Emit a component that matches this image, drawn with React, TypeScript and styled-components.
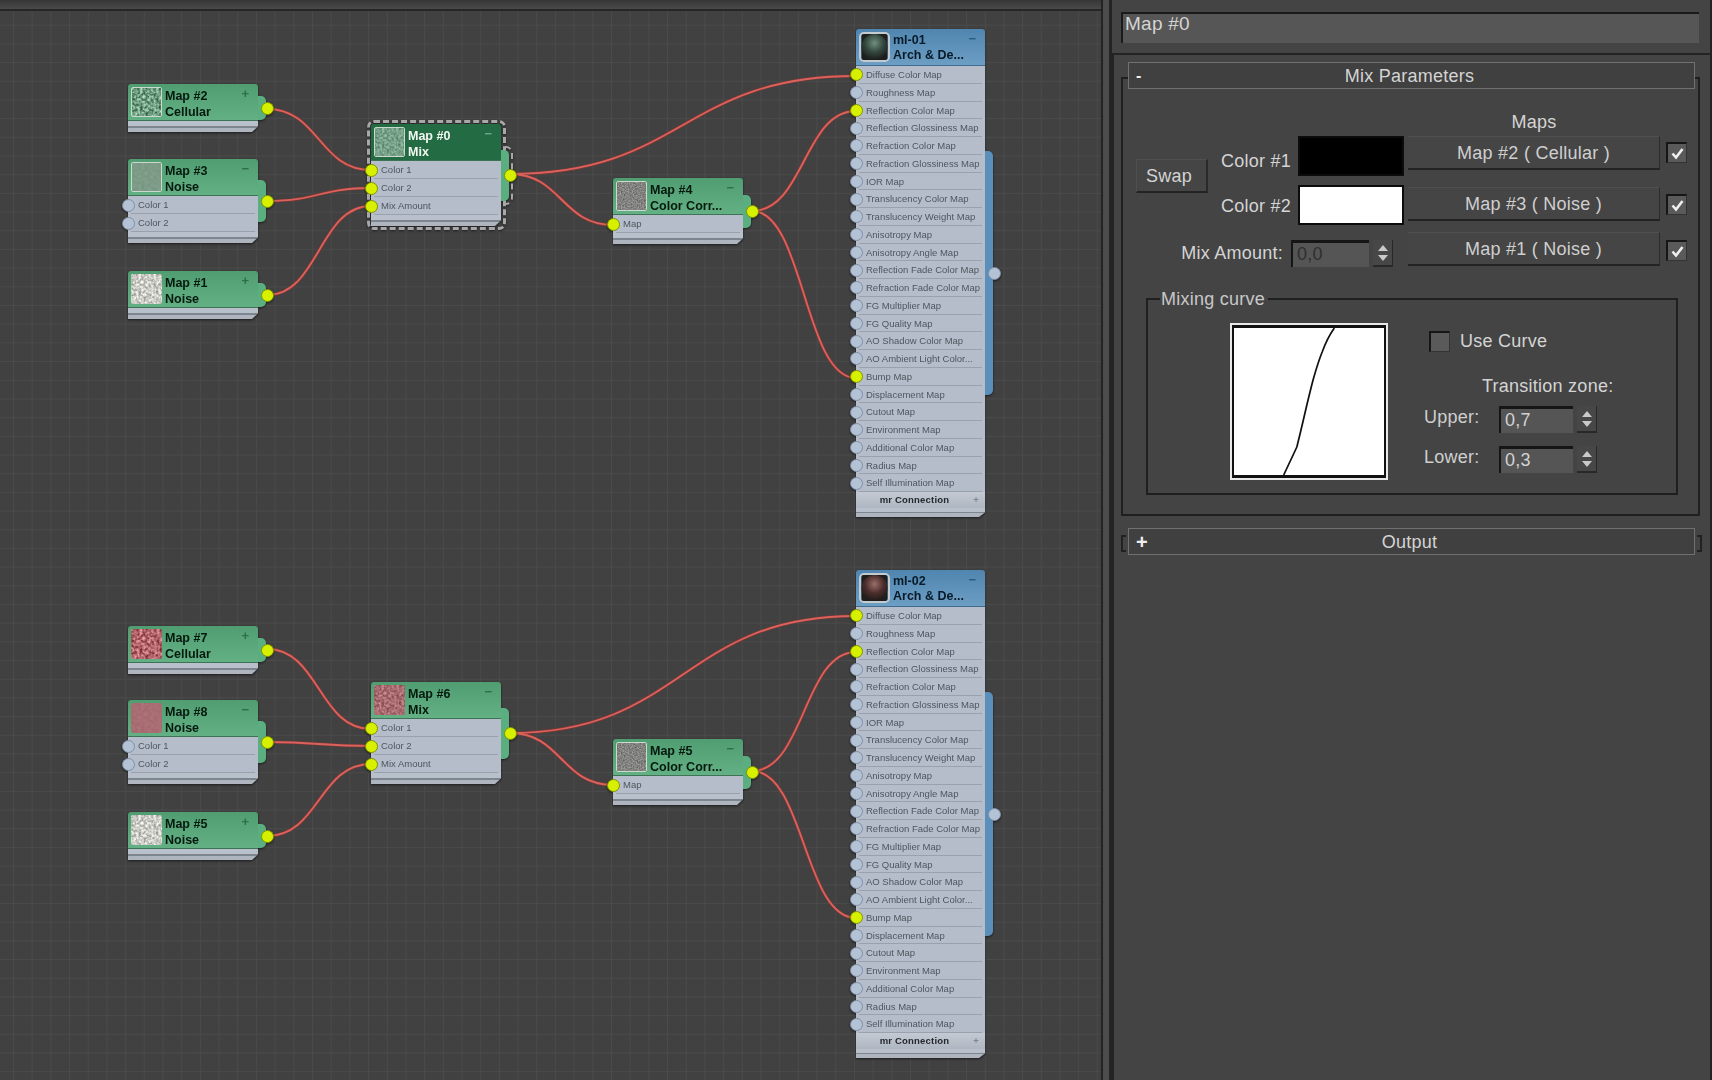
import React, { useId } from "react";
import styled, { createGlobalStyle } from "styled-components";

const GlobalStyle = createGlobalStyle`
  html, body {
    margin: 0;
    background: #444;
    font-family: "Liberation Sans", Arial, sans-serif;
  }
`;

const Page = styled.div`
  display: flex;
  width: 1712px;
  height: 1080px;
  overflow: hidden;
  background: #444;
`;

/* ---------- node canvas ---------- */

const Canvas = styled.div`
  position: relative;
  width: 1101px;
  height: 1080px;
  flex: none;
  background-color: #414141;
  background-image: linear-gradient(#4a4a4a 1px, transparent 1px),
    linear-gradient(90deg, #4a4a4a 1px, transparent 1px);
  background-size: 18.7px 18.7px;
  background-position: 13px 6px;

  &::before {
    content: "";
    position: absolute;
    left: 0;
    right: 0;
    top: 0;
    height: 9px;
    background: linear-gradient(#363636, #4a4a4a);
    border-bottom: 2px solid #262626;
  }
`;

const Wires = styled.svg`
  position: absolute;
  left: 0;
  top: 0;
  filter: blur(0.4px);
`;

const Node = styled.div<{ $x: number; $y: number; $w?: number }>`
  position: absolute;
  left: ${(p) => p.$x}px;
  top: ${(p) => p.$y}px;
  width: ${(p) => p.$w ?? 130}px;
  filter: blur(0.45px) drop-shadow(0 1px 1px #1c1c1c);
`;

const Tab = styled.div<{ $color: string; $dashed?: boolean }>`
  position: absolute;
  top: 25%;
  bottom: 25%;
  right: -8px;
  width: 12px;
  border-radius: 0 5px 5px 0;
  background: ${(p) => p.$color};

  ${(p) =>
    p.$dashed &&
    `&::after {
      content: "";
      position: absolute;
      inset: -4px -4px -4px 8px;
      border: 2px dashed #a8a8a8;
      border-left: none;
      border-radius: 0 7px 7px 0;
    }`}
`;

const Dashed = styled.div`
  position: absolute;
  inset: -4px -5px -4px -4px;
  border: 3px dashed #a8a8a8;
  border-radius: 7px;
`;

const Body = styled.div`
  position: relative;
  display: flex;
  flex-direction: column;
  border-radius: 3px 3px 0 0;
  overflow: hidden;
`;

const Header = styled.div<{ $tone: "green" | "dark" | "blue" }>`
  display: flex;
  align-items: flex-start;
  height: 37px;
  box-sizing: border-box;
  padding: 3px 9px 0 3px;
  gap: 3px;
  border-bottom: 1px solid
    ${(p) => (p.$tone === "blue" ? "#3e6b8e" : "#3f7356")};
  background: ${(p) =>
    p.$tone === "green"
      ? "linear-gradient(#4f9d70, #62b083)"
      : p.$tone === "dark"
      ? "#236b42"
      : "linear-gradient(#4f85af, #6d9ec4)"};
`;

const Titles = styled.div<{ $light?: boolean; $navy?: boolean }>`
  flex: 1;
  min-width: 0;
  padding-top: ${(p) => (p.$navy ? 1 : 2)}px;
  font-size: 12.5px;
  line-height: ${(p) => (p.$navy ? 14.5 : 15.5)}px;
  font-weight: 700;
  white-space: nowrap;
  color: ${(p) => (p.$light ? "#f2f7f3" : p.$navy ? "#081a28" : "#06190f")};
`;

const Toggle = styled.span<{ $color: string }>`
  font-size: 13px;
  line-height: 13px;
  font-weight: 700;
  color: ${(p) => p.$color};
`;

const Row = styled.div<{ $h?: number }>`
  position: relative;
  height: ${(p) => p.$h ?? 18}px;
  box-sizing: border-box;
  padding-left: 10px;
  background: #b4bdc9;
  font-size: 9.5px;
  line-height: ${(p) => p.$h ?? 18}px;
  color: #4e565f;
  white-space: nowrap;

  &::after {
    content: "";
    position: absolute;
    left: 3px;
    right: 3px;
    bottom: 0;
    height: 1px;
    background: #98a1ac;
    box-shadow: 0 1px 0 #c7cdd5;
  }
`;

const Port = styled.span<{ $on?: boolean }>`
  position: absolute;
  left: -6.5px;
  top: 50%;
  width: 13px;
  height: 13px;
  margin-top: -6.5px;
  box-sizing: border-box;
  border-radius: 50%;
  border: 1px solid ${(p) => (p.$on ? "#7f9400" : "#7f8fa5")};
  background: ${(p) => (p.$on ? "#d6f000" : "#b4c2d6")};
`;

const OutPort = styled(Port)`
  left: auto;
  right: -15.5px;
`;

const Connection = styled.div`
  position: relative;
  height: 16px;
  padding-right: 12px;
  text-align: center;
  font-size: 9.5px;
  letter-spacing: 0.2px;
  font-weight: 700;
  line-height: 16px;
  color: #24282d;
  background: linear-gradient(#c4cad3, #aeb6c1);

  span {
    position: absolute;
    right: 6px;
    top: 0;
    color: #7d858f;
  }
`;

const Footer = styled.div<{ $h?: number }>`
  height: ${(p) => p.$h ?? 11}px;
  background: linear-gradient(#b8c0cb 0 45%, #7d858f 45% 60%, #aeb5bf 60%);
  clip-path: polygon(0 0, 100% 0, 100% 50%, calc(100% - 6px) 100%, 0 100%);
`;

const ThumbFrame = styled.div<{ $framed?: boolean; $thick?: boolean }>`
  flex: none;
  width: 31px;
  height: 30px;
  box-sizing: border-box;
  border: ${(p) =>
    p.$thick ? "2px solid #c4cbd0" : p.$framed ? "1px solid #cbd8ce" : "none"};
  border-radius: ${(p) => (p.$thick ? 5 : 2)}px;
  overflow: hidden;

  svg {
    display: block;
    width: 100%;
    height: 100%;
  }
`;

type TexKind =
  | "cellGreen"
  | "flatGreen"
  | "noiseWhite"
  | "mixGreen"
  | "gray"
  | "cellRed"
  | "flatRed"
  | "mixRed";

const textures: Record<
  TexKind,
  { rgb: [number, number, number]; k: number; freq: number; framed?: boolean }
> = {
  cellGreen: { rgb: [0.44, 0.62, 0.51], k: 0.9, freq: 0.35, framed: true },
  flatGreen: { rgb: [0.49, 0.61, 0.53], k: 0.08, freq: 0.3, framed: true },
  noiseWhite: { rgb: [0.8, 0.8, 0.78], k: 0.7, freq: 0.4 },
  mixGreen: { rgb: [0.47, 0.63, 0.54], k: 0.45, freq: 0.4, framed: true },
  gray: { rgb: [0.51, 0.51, 0.5], k: 0.45, freq: 0.7, framed: true },
  cellRed: { rgb: [0.7, 0.4, 0.42], k: 0.8, freq: 0.35 },
  flatRed: { rgb: [0.66, 0.43, 0.45], k: 0.08, freq: 0.3 },
  mixRed: { rgb: [0.66, 0.42, 0.44], k: 0.5, freq: 0.4 },
};

const Thumb: React.FC<{ kind: TexKind }> = ({ kind }) => {
  const id = useId();
  const t = textures[kind];
  const row = (c: number) => `${t.k} 0 0 0 ${c - t.k / 2}`;
  return (
    <ThumbFrame $framed={t.framed}>
      <svg viewBox="0 0 30 30">
        <filter id={id} colorInterpolationFilters="sRGB" x="0" y="0" width="100%" height="100%">
          <feTurbulence type="fractalNoise" baseFrequency={t.freq} numOctaves={2} seed={4} />
          <feColorMatrix values={`${row(t.rgb[0])} ${row(t.rgb[1])} ${row(t.rgb[2])} 0 0 0 0 1`} />
        </filter>
        <rect width="30" height="30" filter={`url(#${id})`} />
      </svg>
    </ThumbFrame>
  );
};

const Sphere: React.FC<{ lit: string; mid: string }> = ({ lit, mid }) => {
  const id = useId();
  return (
    <ThumbFrame $thick>
      <svg viewBox="0 0 30 30">
        <radialGradient id={id} cx="0.5" cy="0.35" r="0.7">
          <stop offset="0" stopColor={lit} />
          <stop offset="0.5" stopColor={mid} />
          <stop offset="1" stopColor="#161616" />
        </radialGradient>
        <rect width="30" height="30" fill="#1e1e1e" />
        <circle cx="15" cy="15" r="15" fill={`url(#${id})`} />
      </svg>
    </ThumbFrame>
  );
};

const PortSlot = styled.div<{ $top: number; $h?: number }>`
  position: absolute;
  left: 0;
  top: ${(p) => p.$top}px;
  height: ${(p) => p.$h ?? 18}px;
  width: 0;
`;

type MapNodeProps = {
  x: number;
  y: number;
  tex: TexKind;
  title: string;
  sub: string;
  toggle: "+" | "−";
  rows?: string[];
  linked?: boolean;
  selected?: boolean;
};

const MapNode: React.FC<MapNodeProps> = ({ x, y, tex, title, sub, toggle, rows = [], linked, selected }) => (
  <Node $x={x} $y={y}>
    {selected && <Dashed />}
    <Tab $color="#5bae80" $dashed={selected} />
    <Body>
      <Header $tone={selected ? "dark" : "green"}>
        <Thumb kind={tex} />
        <Titles $light={selected}>
          {title}
          <br />
          {sub}
        </Titles>
        <Toggle $color={selected ? "#6aa585" : "#2f6f4b"}>{toggle}</Toggle>
      </Header>
      {rows.map((r) => (
        <Row key={r}>{r}</Row>
      ))}
      <Footer />
    </Body>
    {rows.map((r, i) => (
      <PortSlot key={r} $top={37 + 18 * i}>
        <Port $on={linked} />
      </PortSlot>
    ))}
    <OutPort $on />
  </Node>
);

const materialRows = [
  "Diffuse Color Map",
  "Roughness Map",
  "Reflection Color Map",
  "Reflection Glossiness Map",
  "Refraction Color Map",
  "Refraction Glossiness Map",
  "IOR Map",
  "Translucency Color Map",
  "Translucency Weight Map",
  "Anisotropy Map",
  "Anisotropy Angle Map",
  "Reflection Fade Color Map",
  "Refraction Fade Color Map",
  "FG Multiplier Map",
  "FG Quality Map",
  "AO Shadow Color Map",
  "AO Ambient Light Color...",
  "Bump Map",
  "Displacement Map",
  "Cutout Map",
  "Environment Map",
  "Additional Color Map",
  "Radius Map",
  "Self Illumination Map",
];

const linkedRows = ["Diffuse Color Map", "Reflection Color Map", "Bump Map"];
const MAT_ROW = 17.75;

const MaterialNode: React.FC<{ y: number; title: string; lit: string; mid: string }> = ({ y, title, lit, mid }) => (
  <Node $x={856} $y={y} $w={129}>
    <Tab $color="#5b8fbb" />
    <Body>
      <Header $tone="blue">
        <Sphere lit={lit} mid={mid} />
        <Titles $navy>
          {title}
          <br />
          Arch &amp; De...
        </Titles>
        <Toggle $color="#2c5a7e">−</Toggle>
      </Header>
      {materialRows.map((r) => (
        <Row key={r} $h={MAT_ROW}>
          {r}
        </Row>
      ))}
      <Connection>
        mr Connection<span>+</span>
      </Connection>
      <Footer $h={9} />
    </Body>
    {materialRows.map((r, i) => (
      <PortSlot key={r} $top={37 + MAT_ROW * i} $h={MAT_ROW}>
        <Port $on={linkedRows.includes(r)} />
      </PortSlot>
    ))}
    <OutPort />
  </Node>
);

const wire = (x1: number, y1: number, x2: number, y2: number) => {
  const mx = (x1 + x2) / 2;
  return `M${x1} ${y1}C${mx} ${y1} ${mx} ${y2} ${x2} ${y2}`;
};

const wires = [
  wire(267, 109, 371, 170),
  wire(267, 201, 371, 188),
  wire(267, 295, 371, 206),
  wire(510, 174, 856, 76),
  wire(510, 174, 613, 225),
  wire(752, 211, 856, 111),
  wire(752, 211, 856, 378),
  wire(267, 649, 371, 729),
  wire(267, 742, 371, 746),
  wire(267, 836, 371, 764),
  wire(510, 733, 856, 616),
  wire(510, 733, 613, 785),
  wire(752, 771, 856, 652),
  wire(752, 771, 856, 918),
];

/* ---------- parameters panel ---------- */

const Gutter = styled.div`
  flex: none;
  width: 6px;
  border-left: 2px solid #242424;
  background: #4c4c4c;
`;

const Pane = styled.div`
  flex: 1;
  box-sizing: border-box;
  border-left: 3px solid #242424;
  border-right: 2px solid #242424;
  padding-top: 12px;
  color: #d4d4d4;
  font-size: 18px;
  letter-spacing: 0.25px;
`;

const NameField = styled.div`
  height: 31px;
  margin: 0 11px 0 9px;
  padding: 0 0 6px 2px;
  box-sizing: border-box;
  border-top: 2px solid #1a1a1a;
  border-left: 2px solid #1a1a1a;
  background: #565656;
  line-height: 20px;
  font-size: 19px;
`;

const Rollouts = styled.div`
  margin-top: 10px;
  border-top: 2px solid #242424;
  border-left: 2px solid #242424;
  height: 1025px;
  padding: 7px 10px 0 7px;
`;

const RolloutHeader = styled.div<{ $brackets?: boolean }>`
  position: relative;
  z-index: 1;
  display: flex;
  align-items: center;
  justify-content: center;
  height: 27px;
  box-sizing: border-box;
  margin: 0 5px 0 7px;
  padding-right: 4px;
  border: 1px solid #707070;
  background: #404040;
  line-height: 20px;

  ${(p) =>
    p.$brackets &&
    `&::before, &::after {
      content: "";
      position: absolute;
      top: 6px;
      height: 13px;
      width: 3px;
      border: 2px solid #222;
    }
    &::before { left: -8px; border-right: none; }
    &::after { right: -8px; border-left: none; }`}
`;

const OutputHeader = styled(RolloutHeader)`
  margin-top: 12px;
`;

const RolloutSign = styled.span<{ $bold?: boolean }>`
  position: absolute;
  left: 7px;
  font-weight: 700;
  font-size: ${(p) => (p.$bold ? 20 : 16)}px;
  color: #eee;
`;

const Frame = styled.div`
  margin-top: -12px;
  height: 439px;
  box-sizing: border-box;
  border: 2px solid #1f1f1f;
  padding-top: 33px;
`;

const ParamGrid = styled.div`
  display: grid;
  grid-template-columns: 72px 83px 7px 106px 4px 252px 6px 21px;
  grid-template-rows: 24px 49px 47px 35px;
  margin-left: 13px;
`;

const MapsTitle = styled.div`
  grid-column: 6;
  grid-row: 1;
  text-align: center;
  line-height: 20px;
`;

const SwapButton = styled.div`
  grid-column: 1;
  grid-row: 2 / 4;
  align-self: start;
  margin-top: 23px;
  height: 34px;
  padding-right: 5px;
  line-height: 32px;
  text-align: center;
  background: #454545;
  border-bottom: 2px solid #232323;
  border-right: 2px solid #2a2a2a;
  border-top: 1px solid #4f4f4f;
  border-left: 1px solid #4f4f4f;
  box-sizing: border-box;
`;

const ColorLabel = styled.div<{ $row: number; $top: number }>`
  grid-column: 2;
  grid-row: ${(p) => p.$row};
  margin-top: ${(p) => p.$top}px;
  text-align: right;
  line-height: 20px;
`;

const Swatch = styled.div<{ $color: string; $row: number }>`
  grid-column: 4;
  grid-row: ${(p) => p.$row};
  height: 40px;
  box-sizing: border-box;
  background: ${(p) => p.$color};
  border: 2px solid #0c0c0c;
`;

const MapButton = styled.div<{ $row: number; $top?: number }>`
  grid-column: 6;
  grid-row: ${(p) => p.$row};
  height: 34px;
  margin-top: ${(p) => p.$top ?? 0}px;
  box-sizing: border-box;
  line-height: 32px;
  text-align: center;
  background: #454545;
  border-top: 1px solid #4f4f4f;
  border-bottom: 2px solid #232323;
  border-right: 1px solid #2c2c2c;
  color: #cfcfcf;
`;

const CheckBox = styled.div<{ $top?: number }>`
  display: flex;
  align-items: center;
  justify-content: center;
  flex: none;
  width: 21px;
  height: 21px;
  margin-top: ${(p) => p.$top ?? 0}px;
  box-sizing: border-box;
  background: #5a5a5a;
  border-top: 2px solid #161616;
  border-left: 2px solid #161616;
  border-right: 1px solid #333;
  border-bottom: 1px solid #333;
`;

const MapCheck = styled(CheckBox)<{ $row: number }>`
  grid-column: 8;
  grid-row: ${(p) => p.$row};
`;

const AmountLabel = styled.div`
  grid-column: 1 / 3;
  grid-row: 4;
  padding: 11px 8px 0 0;
  text-align: right;
  line-height: 20px;
`;

const AmountSpinner = styled.div`
  grid-column: 3 / 6;
  grid-row: 4;
  margin-top: 8px;
`;

const Spinner = styled.div`
  display: flex;
  gap: 4px;
  height: 27px;
`;

const SpinField = styled.div<{ $dim?: boolean; $w: number }>`
  width: ${(p) => p.$w}px;
  box-sizing: border-box;
  padding-left: 4px;
  background: #555;
  border-top: 3px solid #161616;
  border-left: 2px solid #161616;
  line-height: 22px;
  color: ${(p) => (p.$dim ? "#2f2f2f" : "#d2d2d2")};
`;

const SpinArrows = styled.div`
  display: flex;
  flex-direction: column;
  align-items: center;
  justify-content: center;
  gap: 4px;
  width: 20px;
  box-sizing: border-box;
  background: #474747;
  border-right: 1px solid #282828;
  border-bottom: 2px solid #282828;
`;

const Arrow = styled.span<{ $up?: boolean }>`
  width: 0;
  height: 0;
  border-left: 5px solid transparent;
  border-right: 5px solid transparent;
  ${(p) => (p.$up ? "border-bottom: 6px solid #c9c9c9;" : "border-top: 6px solid #c9c9c9;")}
`;

const Spin: React.FC<{ value: string; dim?: boolean; w?: number }> = ({ value, dim, w = 78 }) => (
  <Spinner>
    <SpinField $dim={dim} $w={w}>{value}</SpinField>
    <SpinArrows>
      <Arrow $up />
      <Arrow />
    </SpinArrows>
  </Spinner>
);

const Group = styled.div`
  position: relative;
  display: flex;
  align-items: flex-start;
  height: 197px;
  box-sizing: border-box;
  margin: 31px 20px 0 23px;
  border: 2px solid #1f1f1f;
  padding: 23px 0 0 82px;
  gap: 36px;
`;

const GroupLabel = styled.span`
  position: absolute;
  left: 12px;
  top: -11px;
  padding: 0 3px 0 1px;
  background: #444;
  line-height: 20px;
  color: #c8c8c8;
`;

const CurveBox = styled.div`
  flex: none;
  width: 158px;
  height: 157px;
  box-sizing: border-box;
  border: 2px solid #e8e8e8;
  background: #fff;

  svg {
    display: block;
    box-sizing: border-box;
    width: 154px;
    height: 153px;
    border: 2px solid #111;
    border-bottom-width: 3px;
    border-top-width: 3px;
  }
`;

const CurveSide = styled.div`
  display: flex;
  flex-direction: column;
`;

const UseCurve = styled.div`
  display: flex;
  align-items: center;
  gap: 10px;
  margin: 8px 0 0 5px;
`;

const ZoneLabel = styled.div`
  margin: 24px 0 10px 58px;
  line-height: 20px;
  white-space: nowrap;
`;

const ZoneRow = styled.div<{ $gap?: number }>`
  display: flex;
  margin-top: ${(p) => p.$gap ?? 0}px;
`;

const ZoneName = styled.div`
  width: 75px;
  line-height: 22px;
  color: #cfcfcf;
`;

function Tick() {
  return (
    <svg width="15" height="15" viewBox="0 0 15 15" fill="none">
      <path d="M2.5 7.5L6 11.5L12.5 3" stroke="#f0f0f0" strokeWidth="2.6" />
    </svg>
  );
}

const App: React.FC = () => (
  <Page>
    <GlobalStyle />
    <Canvas>
      <Wires width="1101" height="1080" viewBox="0 0 1101 1080" fill="none">
        {wires.map((d) => (
          <path key={d + "o"} d={d} stroke="#7c3735" strokeWidth="3.2" />
        ))}
        {wires.map((d) => (
          <path key={d} d={d} stroke="#da625c" strokeWidth="1.8" />
        ))}
      </Wires>

      <MapNode x={128} y={84} tex="cellGreen" title="Map #2" sub="Cellular" toggle="+" />
      <MapNode x={128} y={159} tex="flatGreen" title="Map #3" sub="Noise" toggle="−" rows={["Color 1", "Color 2"]} />
      <MapNode x={128} y={271} tex="noiseWhite" title="Map #1" sub="Noise" toggle="+" />
      <MapNode x={371} y={124} tex="mixGreen" title="Map #0" sub="Mix" toggle="−" rows={["Color 1", "Color 2", "Mix Amount"]} linked selected />
      <MapNode x={613} y={178} tex="gray" title="Map #4" sub="Color Corr..." toggle="−" rows={["Map"]} linked />
      <MaterialNode y={29} title="ml-01" lit="#6f8f7e" mid="#34483e" />

      <MapNode x={128} y={626} tex="cellRed" title="Map #7" sub="Cellular" toggle="+" />
      <MapNode x={128} y={700} tex="flatRed" title="Map #8" sub="Noise" toggle="−" rows={["Color 1", "Color 2"]} />
      <MapNode x={128} y={812} tex="noiseWhite" title="Map #5" sub="Noise" toggle="+" />
      <MapNode x={371} y={682} tex="mixRed" title="Map #6" sub="Mix" toggle="−" rows={["Color 1", "Color 2", "Mix Amount"]} linked />
      <MapNode x={613} y={739} tex="gray" title="Map #5" sub="Color Corr..." toggle="−" rows={["Map"]} linked />
      <MaterialNode y={570} title="ml-02" lit="#9a6f6a" mid="#4c2e2c" />
    </Canvas>

    <Gutter />

    <Pane>
      <NameField>Map #0</NameField>
      <Rollouts>
        <RolloutHeader>
          <RolloutSign>-</RolloutSign>
          Mix Parameters
        </RolloutHeader>
        <Frame>
          <ParamGrid>
            <MapsTitle>Maps</MapsTitle>
            <SwapButton>Swap</SwapButton>

            <ColorLabel $row={2} $top={15}>Color #1</ColorLabel>
            <Swatch $row={2} $color="#000" />
            <MapButton $row={2}>Map #2 ( Cellular )</MapButton>
            <MapCheck $row={2} $top={6}><Tick /></MapCheck>

            <ColorLabel $row={3} $top={11}>Color #2</ColorLabel>
            <Swatch $row={3} $color="#fff" />
            <MapButton $row={3} $top={2}>Map #3 ( Noise )</MapButton>
            <MapCheck $row={3} $top={9}><Tick /></MapCheck>

            <AmountLabel>Mix Amount:</AmountLabel>
            <AmountSpinner><Spin value="0,0" dim /></AmountSpinner>
            <MapButton $row={4}>Map #1 ( Noise )</MapButton>
            <MapCheck $row={4} $top={8}><Tick /></MapCheck>
          </ParamGrid>

          <Group>
            <GroupLabel>Mixing curve</GroupLabel>
            <CurveBox>
              <svg viewBox="0 0 148 147" fill="none" preserveAspectRatio="none">
                <path
                  d="M49 147Q57 130 62 119C68 95 72 75 78 52Q83 34 87 24Q92 10 99 0"
                  stroke="#111"
                  strokeWidth="1.7"
                />
              </svg>
            </CurveBox>
            <CurveSide>
              <UseCurve><CheckBox />Use Curve</UseCurve>
              <ZoneLabel>Transition zone:</ZoneLabel>
              <ZoneRow>
                <ZoneName>Upper:</ZoneName>
                <Spin value="0,7" w={74} />
              </ZoneRow>
              <ZoneRow $gap={13}>
                <ZoneName>Lower:</ZoneName>
                <Spin value="0,3" w={74} />
              </ZoneRow>
            </CurveSide>
          </Group>
        </Frame>
        <OutputHeader $brackets>
          <RolloutSign $bold>+</RolloutSign>
          Output
        </OutputHeader>
      </Rollouts>
    </Pane>
  </Page>
);

export default App;
